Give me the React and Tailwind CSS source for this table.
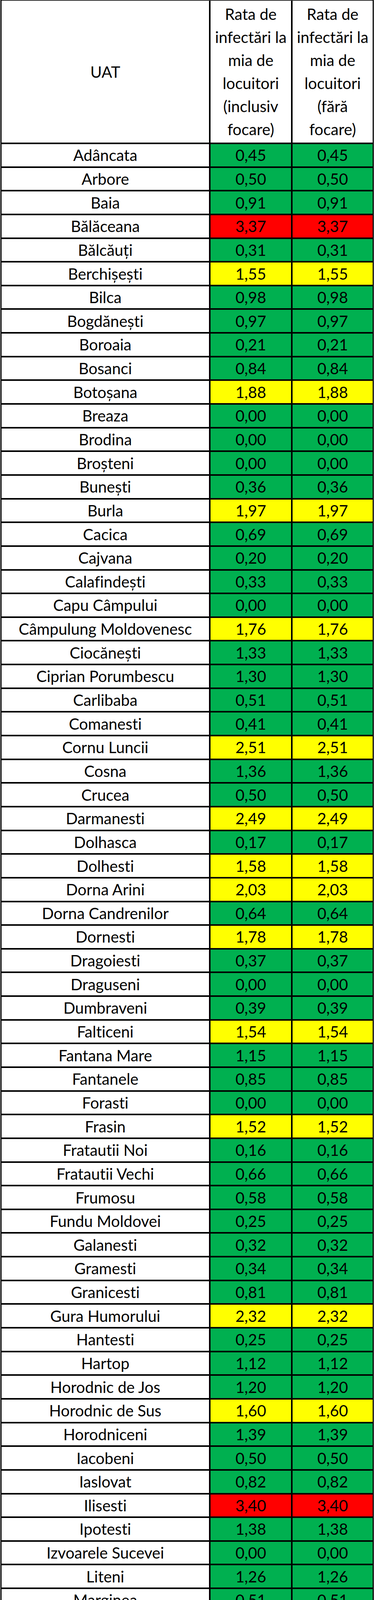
import React from "react";

const G = "g", Y = "y", R = "r";
const rows = [
  ["Adâncata", "0,45", G],
  ["Arbore", "0,50", G],
  ["Baia", "0,91", G],
  ["Bălăceana", "3,37", R],
  ["Bălcăuți", "0,31", G],
  ["Berchișești", "1,55", Y],
  ["Bilca", "0,98", G],
  ["Bogdănești", "0,97", G],
  ["Boroaia", "0,21", G],
  ["Bosanci", "0,84", G],
  ["Botoșana", "1,88", Y],
  ["Breaza", "0,00", G],
  ["Brodina", "0,00", G],
  ["Broșteni", "0,00", G],
  ["Bunești", "0,36", G],
  ["Burla", "1,97", Y],
  ["Cacica", "0,69", G],
  ["Cajvana", "0,20", G],
  ["Calafindești", "0,33", G],
  ["Capu Câmpului", "0,00", G],
  ["Câmpulung Moldovenesc", "1,76", Y],
  ["Ciocănești", "1,33", G],
  ["Ciprian Porumbescu", "1,30", G],
  ["Carlibaba", "0,51", G],
  ["Comanesti", "0,41", G],
  ["Cornu Luncii", "2,51", Y],
  ["Cosna", "1,36", G],
  ["Crucea", "0,50", G],
  ["Darmanesti", "2,49", Y],
  ["Dolhasca", "0,17", G],
  ["Dolhesti", "1,58", Y],
  ["Dorna Arini", "2,03", Y],
  ["Dorna Candrenilor", "0,64", G],
  ["Dornesti", "1,78", Y],
  ["Dragoiesti", "0,37", G],
  ["Draguseni", "0,00", G],
  ["Dumbraveni", "0,39", G],
  ["Falticeni", "1,54", Y],
  ["Fantana Mare", "1,15", G],
  ["Fantanele", "0,85", G],
  ["Forasti", "0,00", G],
  ["Frasin", "1,52", Y],
  ["Fratautii Noi", "0,16", G],
  ["Fratautii Vechi", "0,66", G],
  ["Frumosu", "0,58", G],
  ["Fundu Moldovei", "0,25", G],
  ["Galanesti", "0,32", G],
  ["Gramesti", "0,34", G],
  ["Granicesti", "0,81", G],
  ["Gura Humorului", "2,32", Y],
  ["Hantesti", "0,25", G],
  ["Hartop", "1,12", G],
  ["Horodnic de Jos", "1,20", G],
  ["Horodnic de Sus", "1,60", Y],
  ["Horodniceni", "1,39", G],
  ["Iacobeni", "0,50", G],
  ["Iaslovat", "0,82", G],
  ["Ilisesti", "3,40", R],
  ["Ipotesti", "1,38", G],
  ["Izvoarele Sucevei", "0,00", G],
  ["Liteni", "1,26", G],
  ["Marginea", "0,51", G],
  ["Malini", "0,51", G],
  ["Manastirea Humorului", "2,07", Y],
  ["Milisauti", "1,42", G],
  ["Mitocu Dragomirnei", "1,77", Y],
  ["Moara", "0,78", G],
  ["Moldova-Sulita", "0,50", G],
  ["Moldovita", "0,00", G],
  ["Musenita", "0,00", G],
  ["Ostra", "0,00", G],
  ["Panaci", "4,47", R],
  ["Paltinoasa", "1,30", G],
  ["Patrauti", "0,70", G],
  ["Partestii de Jos", "1,40", G],
  ["Poiana Stampei", "3,04", R],
  ["Poieni Solca", "0,44", G],
  ["Pojorata", "4,69", R, "2,01", Y],
  ["Preutesti", "0,56", G],
  ["Putna", "2,03", Y],
  ["Radaseni", "0,24", G],
  ["Radauti", "2,10", Y],
  ["Rasca", "0,58", G],
  ["Sadova", "2,30", Y],
  ["Salcea", "0,71", G],
  ["Satu Mare", "2,51", Y],
  ["Siminicea", "0,34", G],
  ["Siret", "0,83", G],
  ["Slatina", "0,35", G],
  ["Solca", "0,38", G],
  ["Straja", "0,33", G],
  ["Stroiesti", "0,88", G],
  ["Stulpicani", "0,66", G],
  ["Suceava", "2,02", Y],
  ["Sucevita", "1,17", G],
  ["Șaru Dornei", "1,67", Y],
  ["Șcheia", "1,71", Y],
  ["Șerbauti", "0,00", G],
  ["Todiresti", "1,80", Y],
  ["Udesti", "0,24", G],
  ["Ulma", "0,45", G],
  ["Vadu Moldovei", "0,66", G],
  ["Valea Moldovei", "0,21", G],
  ["Vama", "1,44", G],
  ["Vatra Dornei", "2,96", Y],
  ["Vatra Moldovitei", "0,00", G],
  ["Veresti", "1,07", G],
  ["Vicovu de Jos", "0,72", G],
  ["Vicovu de Sus", "0,17", G],
  ["Voitinel", "0,37", G],
  ["Volovat", "1,58", Y],
  ["Vulturesti", "0,55", G],
  ["Zamostea", "1,32", G],
  ["Zvoristea", "1,46", G],
];

const bg = {
  g: "bg-[#00b050]",
  y: "bg-[#ffff00]",
  r: "bg-[#ff0000]",
};

const font = { fontFamily: "Lato, 'Noto Sans', sans-serif" };

function Row({ name, v1, c1, v2, c2 }) {
  return (
    <div className="grid grid-cols-[531px_210px_209px] h-[60.65px] border-b-4 border-black">
      <div className="flex items-center justify-center bg-white">{name}</div>
      <div className={"flex items-center justify-center border-l-4 border-black " + bg[c1]}>{v1}</div>
      <div className={"flex items-center justify-center border-l-4 border-black " + bg[c2]}>{v2}</div>
    </div>
  );
}

export default function App() {
  return (
    <div
      className="bg-white w-[960px] text-black text-[40px] leading-[1.2] [font-variant-ligatures:none]"
      style={font}
    >
      <div className="ml-[1px] w-[956px] border-l-[3px] border-r-[3px] border-black">
        <div className="grid grid-cols-[531px_210px_209px] h-[369px] border-t-2 border-t-[#333] border-b-4 border-b-black">
          <div className="flex items-center justify-center">UAT</div>
          <div className="flex items-center justify-center border-l-4 border-black text-center leading-[59px]">
            <div>
              Rata de<br />infectări la<br />mia de<br />locuitori<br />(inclusiv<br />focare)
            </div>
          </div>
          <div className="flex items-center justify-center border-l-4 border-black text-center leading-[59px]">
            <div>
              Rata de<br />infectări la<br />mia de<br />locuitori<br />(fără<br />focare)
            </div>
          </div>
        </div>
        {rows.map((r) => (
          <Row
            key={r[0]}
            name={r[0]}
            v1={r[1]}
            c1={r[2]}
            v2={r[3] || r[1]}
            c2={r[4] || r[2]}
          />
        ))}
      </div>
      <div className="ml-[1px] w-[959px] flex items-start">
        <div className="w-[532px] h-[62px] border-l-[3px] border-black bg-white flex items-center justify-center">
          TOTAL
        </div>
        <div className="w-[213px] h-[64px] border-l-[6px] border-t-2 border-b-[6px] border-black bg-[#ff9900] flex items-center justify-center">
          1,27
        </div>
        <div className="w-[214px] h-[64px] border-l-[6px] border-r-[4px] border-t-2 border-b-[6px] border-black bg-[#ff9900] flex items-center justify-center">
          1,26
        </div>
      </div>
    </div>
  );
}
